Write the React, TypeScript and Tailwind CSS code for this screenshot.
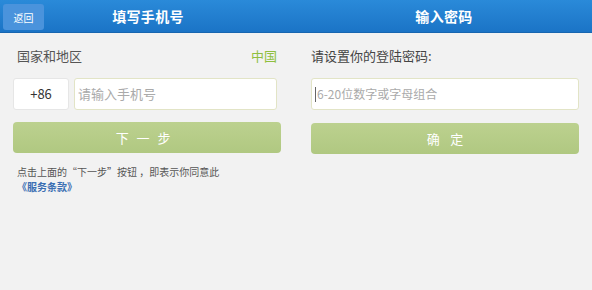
import React from 'react';

const font = { fontFamily: '"Noto Sans CJK SC", "Noto Sans", sans-serif' };

export default function App() {
  return (
    <div className="w-[592px] h-[290px] bg-[#f2f2f2] flex overflow-hidden" style={font}>
      {/* 左：填写手机号 */}
      <section className="w-[296px] flex flex-col">
        <header className="h-[33px] relative flex items-center justify-center bg-gradient-to-b from-[#2a8ad9] to-[#1b74c6] border-b border-[#1766b0]">
          <button className="absolute left-[3px] top-[4px] w-[41px] h-[26px] rounded-[3px] bg-[#4a93dc] text-white text-[10px] flex items-center justify-center">
            返回
          </button>
          <h1 className="text-white text-[14px] font-bold tracking-wide">填写手机号</h1>
        </header>

        <div className="pl-[13px] pr-[15px] flex flex-col">
          <div className="h-[45px] flex items-center justify-between pl-[4px] pr-[4px]">
            <span className="text-[13px] text-[#555]">国家和地区</span>
            <span className="text-[13px] text-[#8fbf3f]">中国</span>
          </div>

          <div className="flex gap-[5px] pr-[4px]">
            <div className="w-[56px] h-[32px] bg-white border border-[#e6e6e6] rounded-[3px] flex items-center justify-center text-[13px] text-[#333]">
              +86
            </div>
            <div className="flex-1 h-[32px] bg-white border border-[#e2e4c6] rounded-[3px] flex items-center px-[3px] text-[13px] text-[#aaa]">
              请输入手机号
            </div>
          </div>

          <button className="mt-[12px] h-[31px] rounded-[4px] bg-gradient-to-b from-[#bcd18f] to-[#b0c881] text-white text-[13px] tracking-[0.6em]">
            下一步
          </button>

          <p className="mt-[11px] pl-[4px] text-[10px] leading-[15px] text-[#555]">
            点击上面的“下一步”按钮 ，即表示你同意此
            <br />
            <span className="text-[#3b6fb3] font-bold">《服务条款》</span>
          </p>
        </div>
      </section>

      {/* 右：输入密码 */}
      <section className="w-[296px] flex flex-col">
        <header className="h-[33px] flex items-center justify-center bg-gradient-to-b from-[#2a8ad9] to-[#1b74c6] border-b border-[#1766b0]">
          <h1 className="text-white text-[14px] font-bold tracking-wide">输入密码</h1>
        </header>

        <div className="pl-[15px] pr-[13px] flex flex-col">
          <div className="h-[45px] flex items-center">
            <span className="text-[13px] text-[#444]">请设置你的登陆密码:</span>
          </div>

          <div className="h-[32px] bg-white border border-[#e2e4c6] rounded-[3px] flex items-center pl-[3px] text-[12px] text-[#aaa]">
            <span className="w-px h-[15px] bg-[#666] mr-[1px]" />
            6-20位数字或字母组合
          </div>

          <button className="mt-[13px] h-[31px] rounded-[4px] bg-gradient-to-b from-[#bcd18f] to-[#b0c881] text-white text-[13px] tracking-[0.8em] pl-[0.8em]">
            确定
          </button>
        </div>
      </section>
    </div>
  );
}
